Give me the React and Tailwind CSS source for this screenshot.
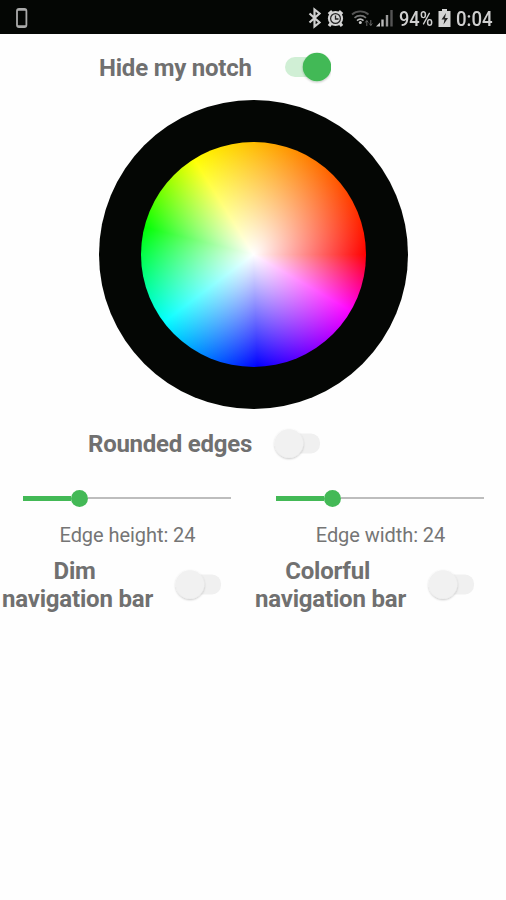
import React from "react";

function Toggle({ on = false }) {
  return (
    <svg width="54" height="40" viewBox="0 0 54 40" className="shrink-0">
      <defs>
        <filter id="thumb" x="-30%" y="-30%" width="160%" height="160%">
          <feDropShadow dx="0" dy="1" stdDeviation="0.8" floodColor="#000" floodOpacity="0.24" />
        </filter>
      </defs>
      {on ? (
        <>
          <rect x="8" y="10" width="40" height="20" rx="10" fill="#d0efd5" />
          <circle cx="40" cy="20" r="14.3" fill="#43b956" filter="url(#thumb)" />
        </>
      ) : (
        <>
          <rect x="8" y="9.5" width="40" height="20" rx="9" fill="#f0f0f0" />
          <circle cx="17" cy="19.5" r="14.3" fill="#f1f1f1" filter="url(#thumb)" />
        </>
      )}
    </svg>
  );
}

function Slider() {
  return (
    <div className="flex h-[18px] items-center pl-[23px] pr-[22px]">
      <div className="h-[5px] w-[48px] bg-[#43b956]" />
      <div className="size-[17px] rounded-full bg-[#43b956]" />
      <div className="h-[2px] flex-1 bg-[#bdbdbd]" />
    </div>
  );
}

function EdgeColumn({ label, title }) {
  return (
    <div className="w-[253px]">
      <Slider />
      <div className="mt-[15px] pl-[2px] text-center text-[20px] leading-[26px] tracking-[-0.06px] text-[#757575]">{label}</div>
      <div className="mt-[9px] flex items-center">
        <div className="w-[155px] whitespace-nowrap text-center text-[24px] font-bold leading-[28px] tracking-[-0.2px] text-[#707070]">
          {title}&nbsp;
          <br />
          navigation bar
        </div>
        <div className="ml-[18px] flex">
          <Toggle />
        </div>
      </div>
    </div>
  );
}

function StatusBar() {
  return (
    <div className="flex h-[34px] items-center bg-[#040604] text-[#cfcfcf]">
      <svg width="506" height="34" viewBox="0 0 506 34" className="-mr-[506px] shrink-0" fill="none">
        <rect x="17" y="9" width="9.4" height="18" rx="2" stroke="#aaa" strokeWidth="1.8" />
        <path d="M17.5 10h8.4M17.5 26h8.4" stroke="#aaa" strokeWidth="1.5" />
        <path d="M309.5 13.5l10 9-5 4V9.5l5 4-10 9" stroke="#cfcfcf" strokeWidth="2.2" />
        <circle cx="335.5" cy="18.5" r="7.6" fill="#d4d4d4" />
        <path d="M328.8 14.2l3.4-3M342.2 14.2l-3.400-3M331 23.500l-2 2.500M340 23.500l2 2.500" stroke="#d4d4d4" strokeWidth="3.2" />
        <circle cx="335.5" cy="18.5" r="4.9" stroke="#222" strokeWidth="1.2" />
        <path d="M335.5 15.5v3.5h3" stroke="#222" strokeWidth="1.3" />
        <path d="M352 14.5a12.5 12.5 0 0 1 16.5 0" stroke="#555" strokeWidth="1.7" />
        <path d="M354.5 17.8a9 9 0 0 1 11.5 0" stroke="#777" strokeWidth="1.7" />
        <path d="M357 20.6a5 5 0 0 1 6.500 0" stroke="#bbb" strokeWidth="1.7" />
        <circle cx="360.3" cy="22.4" r="1.5" fill="#ccc" />
        <path d="M366.8 26v-5M365.3 22.5l1.5-2 1.5 2M370.8 20v5.500M369.3 23.5l1.5 2 1.5-2" stroke="#666" strokeWidth="1" />
        <path d="M376 26.5l4-4v4z" fill="#ccc" />
        <path d="M382.5 19.5v7" stroke="#bbb" strokeWidth="2.4" />
        <path d="M387 15v11.5" stroke="#999" strokeWidth="2.4" />
        <path d="M391.5 10v16.5" stroke="#555" strokeWidth="2.4" />
        <path d="M442 9h5v2h3.500v16h-12V11h3.500z" fill="#d4d4d4" />
        <path d="M446 13l-4.500 6.500h3l-1 5 4.500-6.500h-3z" fill="#222" />
      </svg>
      <div className="flex w-full items-center pl-[399px] pt-[3px] text-[20px] font-medium leading-6">
        <span className="w-[57px] origin-left scale-x-[0.91]">94%</span>
        <span className="origin-left scale-x-[0.93]">0:04</span>
      </div>
    </div>
  );
}

export default function App() {
  return (
    <div className="h-[900px] w-[506px] overflow-hidden bg-[#fefefe] font-['Roboto','Liberation_Sans',sans-serif]">
      <StatusBar />
      <div className="flex h-[66px] items-center pl-[99px] text-[24px] font-bold tracking-[-0.22px] text-[#707070]">
        <span className="w-[178px] whitespace-nowrap pt-[2px]">Hide my notch</span>
        <Toggle on />
      </div>
      <div className="ml-[99px] flex size-[309px] items-center justify-center rounded-full bg-[#040604]">
        <div className="size-[225px] rounded-full bg-[radial-gradient(circle_closest-side,#fff_0%,rgba(255,255,255,0)_100%),conic-gradient(from_90deg,#f00_0deg,#f0f_30deg,#00f_88deg,#0ff_143deg,#0f0_194deg,#ff0_238deg,#f00_360deg)]" />
      </div>
      <div className="flex h-[70px] items-center pl-[88px] text-[24px] font-bold tracking-[-0.25px] text-[#707070]">
        <span className="w-[184px] whitespace-nowrap">Rounded edges</span>
        <Toggle />
      </div>
      <div className="mt-[10px] flex">
        <EdgeColumn label="Edge height: 24" title="Dim" />
        <EdgeColumn label="Edge width: 24" title="Colorful" />
      </div>
    </div>
  );
}
